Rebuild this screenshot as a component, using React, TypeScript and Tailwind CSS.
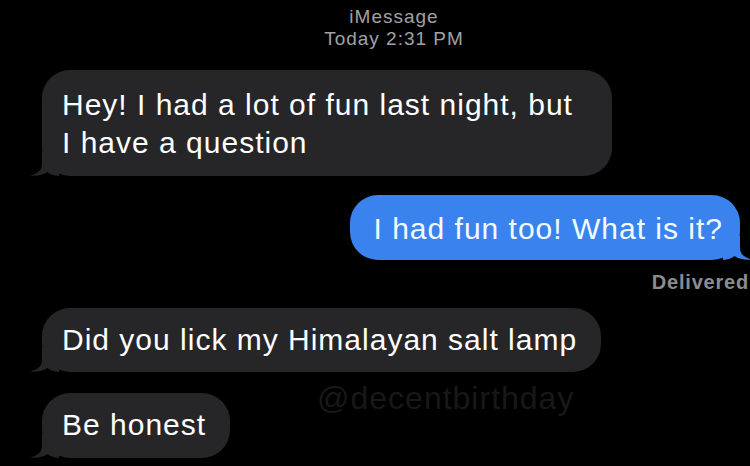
import React from "react";

const font = { fontFamily: '"Liberation Sans", Arial, sans-serif' };

const GrayTail = () => (
  <svg
    className="absolute -left-[13px] bottom-0 h-[24px] w-[30px]"
    viewBox="0 0 30 24"
  >
    <path
      d="M13 0 V12 C13 18 9 21.5 1 23.6 C8 24.4 14 23 18.5 20 C21 22.5 25 23.6 30 24 V0 Z"
      fill="#262629"
    />
  </svg>
);

const BlueTail = () => (
  <svg
    className="absolute -right-[13px] bottom-0 h-[24px] w-[30px] -scale-x-100"
    viewBox="0 0 30 24"
  >
    <path
      d="M13 0 V12 C13 18 9 21.5 1 23.6 C8 24.4 14 23 18.5 20 C21 22.5 25 23.6 30 24 V0 Z"
      fill="#3a83ef"
    />
  </svg>
);

interface BubbleProps {
  children: React.ReactNode;
  className?: string;
}

// className must carry a width (w-fit or fixed)
const Received = ({ children, className }: BubbleProps) => (
  <div
    className={
      "relative ml-[42px] rounded-[28px] bg-[#262629] pl-[20px] pr-[24px] text-[30px] leading-[38px] tracking-[1px] text-white " +
      (className ?? "")
    }
  >
    <span className="relative z-10">{children}</span>
    <GrayTail />
  </div>
);

export default function App() {
  return (
    <div
      className="relative h-[466px] w-[750px] overflow-hidden bg-black"
      style={font}
    >
      {/* header */}
      <div className="flex flex-col items-center pl-[38px] pt-[6px] text-[19px] leading-[22px] tracking-[1px] text-[#a2a2a4]">
        <span>iMessage</span>
        <span>Today 2:31 PM</span>
      </div>

      <Received className="mt-[20px] w-[570px] pb-[14px] pt-[16px]">
        Hey! I had a lot of fun last night, but
        <br />I have a question
      </Received>

      <div className="mt-[19px] flex justify-end pr-[10px]">
        <div className="relative rounded-[28px] bg-[#3a83ef] pb-[12px] pl-[23px] pr-[17px] pt-[15px] text-[30px] leading-[38px] tracking-[1px] text-[#f4fbff]">
          <span className="relative z-10">I had fun too! What is it?</span>
          <BlueTail />
        </div>
      </div>

      <div className="mt-[12px] flex justify-end">
        <span className="mr-[1px] text-[20px] font-semibold leading-[21px] tracking-[0.8px] text-[#8c8c90]">
          Delivered
        </span>
      </div>

      <Received className="mt-[15px] w-fit pb-[13px] pt-[13px]">
        Did you lick my Himalayan salt lamp
      </Received>

      <Received className="mt-[21px] w-fit pb-[14px] pt-[13px]">
        Be honest
      </Received>

      {/* watermark */}
      <span className="pointer-events-none absolute left-[317px] top-[380px] text-[32px] leading-[36px] tracking-[1px] text-[#18181a]">
        @decentbirthday
      </span>
    </div>
  );
}
